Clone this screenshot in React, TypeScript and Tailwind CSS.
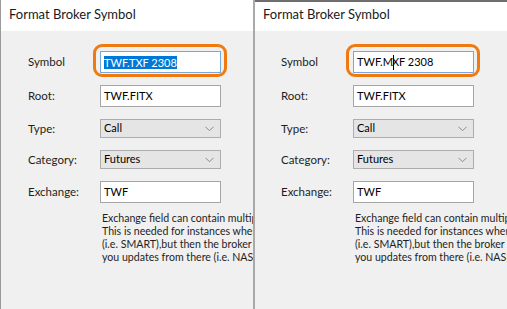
import React from "react";

const font = { fontFamily: 'Lato, "Liberation Sans", sans-serif' };

function Chevron() {
  return (
    <svg width="9" height="6" viewBox="0 0 9 6" className="shrink-0">
      <path d="M0.5 0.8 L4.5 4.8 L8.5 0.8" fill="none" stroke="#8a8a8a" strokeWidth="1" />
    </svg>
  );
}

function Row({ label, children, mt }: { label: string; children: React.ReactNode; mt: string }) {
  return (
    <div className={`flex items-center ${mt}`}>
      <div className="w-[72px] text-[11.5px] text-[#1e1e1e]">{label}</div>
      {children}
    </div>
  );
}

function TextBox({ value, focus }: { value: React.ReactNode; focus?: boolean }) {
  return (
    <div
      className={`h-[22px] w-[121px] border bg-white px-[3px] flex items-center text-[11px] text-black ${
        focus ? "border-[#7aa7d8]" : "border-[#a6a6a6]"
      }`}
    >
      {value}
    </div>
  );
}

function Select({ value }: { value: string }) {
  return (
    <div className="h-[19px] w-[121px] border border-[#adadad] bg-[#e5e5e5] pl-[3px] pr-[6px] flex items-center justify-between text-[11px] text-black">
      <span>{value}</span>
      <Chevron />
    </div>
  );
}

function Panel({ symbol, pad }: { symbol: React.ReactNode; pad: string }) {
  return (
    <div className="flex flex-col h-full" style={font}>
      <div className="h-[31px] bg-white shrink-0 flex items-center pl-[8px] pb-[1px] text-[13px] text-[#1a1a1a]">
        Format Broker Symbol
      </div>
      <div className={`flex-1 bg-[#f0f0f0] pt-[20px] ${pad}`}>
        <div className="relative">
          <div className="absolute left-[65px] top-[-7px] w-[134px] h-[33px] rounded-[9px] border-[3px] border-[#f07a12]" />
          <Row label="Symbol" mt="mt-0">
            <TextBox value={symbol} focus />
          </Row>
        </div>
        <Row label="Root:" mt="mt-[12px]">
          <TextBox value="TWF.FITX" />
        </Row>
        <Row label="Type:" mt="mt-[12px]">
          <Select value="Call" />
        </Row>
        <Row label="Category:" mt="mt-[12px]">
          <Select value="Futures" />
        </Row>
        <Row label="Exchange:" mt="mt-[12px]">
          <TextBox value="TWF" />
        </Row>
        <div className="ml-[74px] mt-[9px] text-[10.6px] leading-[13px] text-[#1e1e1e] whitespace-nowrap">
          <div>Exchange field can contain multiple exchanges, separated by comma.</div>
          <div>This is needed for instances where the order is routed to one exchange</div>
          <div>(i.e. SMART),but then the broker only gives</div>
          <div>you updates from there (i.e. NASDAQ).</div>
        </div>
      </div>
    </div>
  );
}

export default function App() {
  return (
    <div className="flex w-[507px] h-[309px] overflow-hidden bg-[#f0f0f0]">
      {/* left window */}
      <div className="w-[253px] shrink-0 h-full overflow-hidden border-l border-[#9a9a9a]">
        <Panel
          pad="pl-[27px]"
          symbol={<span className="bg-[#0078d7] text-white leading-[13px]">TWF.TXF 2308</span>}
        />
      </div>

      {/* split line */}
      <div className="w-[2px] shrink-0 h-full bg-[#a9a9a9]" />

      {/* right window */}
      <div className="flex-1 h-full overflow-hidden border-t-2 border-[#6e6e6e]">
        <div className="-mt-[2px] h-[311px]">
          <Panel
            pad="pl-[26px]"
            symbol={
              <span className="flex items-center">
                TWF.M
                <span className="inline-block w-px h-[15px] bg-black -mr-[2px]" />
                XF 2308
              </span>
            }
          />
        </div>
      </div>
    </div>
  );
}
